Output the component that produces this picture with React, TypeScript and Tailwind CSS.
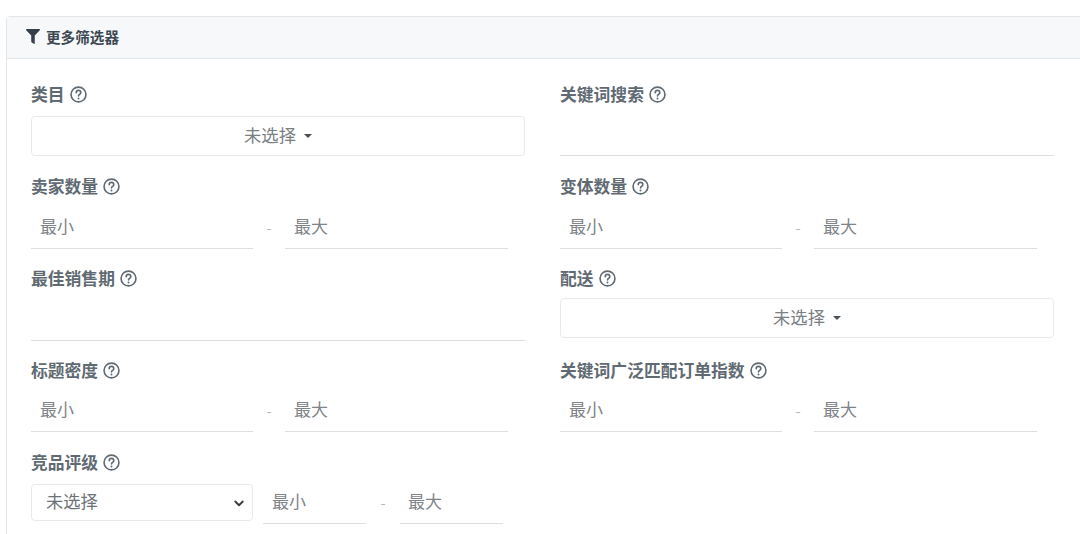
const cjk = "font-['Noto_Sans_CJK_SC','Noto_Sans',sans-serif]";

const Help = () => (
    <svg width="17" height="17" viewBox="0 0 24 24" fill="none" stroke="#5f6a72" strokeWidth="2.3" className="ml-[5px] shrink-0">
        <circle cx="12" cy="12" r="10.5" />
        <path d="M8.8 9.4a3.2 3.2 0 0 1 6.4 0c0 2.4-3.2 2.6-3.2 4.8" strokeLinecap="round" />
        <circle cx="12" cy="17.6" r="1.4" fill="#5f6a72" stroke="none" />
    </svg>
);

const Label = ({ text }: { text: string }) => (
    <div className="flex items-center h-[20px] text-[16.8px] font-bold text-[#5f6a72] leading-none">
        {text}
        <Help />
    </div>
);

const Caret = () => (
    <span className="ml-[8px] mt-[3px] w-0 h-0 border-x-[4px] border-x-transparent border-t-[4.5px] border-t-[#495057]"></span>
);

const Dropdown = ({ top }: { top: string }) => (
    <div className={`${top} h-[40px] w-[494px] flex items-center justify-center pb-[3px] rounded-[4px] border border-[#e7eaed] bg-white text-[17.3px] text-[#7a7f83]`}>
        未选择
        <Caret />
    </div>
);

const Field = ({ text, width }: { text: string; width: string }) => (
    <div className={`${width} h-[41px] flex items-center pb-[4px] border-b border-[#dcdfe2] text-[17px] text-[#7f8488]`}>
        {text}
    </div>
);

const Range = ({ top }: { top: string }) => (
    <div className={`${top} flex items-center`}>
        <Field text="最小" width="w-[222px] pl-[9px]" />
        <span className="w-[32px] text-center text-[15px] text-[#b5b9bc]">-</span>
        <Field text="最大" width="w-[223px] pl-[9px]" />
    </div>
);

const TextField = ({ top }: { top: string }) => <div className={`${top} h-[41px] w-[494px] border-b border-[#dcdfe2]`}></div>;

const App = () => {
    return (
        <div className={`w-[1080px] h-[534px] overflow-hidden bg-white pt-[16px] pl-[6px] ${cjk}`}>
            <div className="w-[1200px] h-[600px] rounded-t-[4px] border border-[#e3e6e9]">
                <div className="h-[42px] flex items-center pl-[19px] pb-[2px] bg-[#f7f8fa] border-b border-[#e3e6e9] text-[14.6px] font-bold text-[#3d4852]">
                    <svg width="14" height="15" viewBox="0 0 512 512" fill="#343f4b" className="mr-[6px]" preserveAspectRatio="none">
                        <path d="M487.98 0H24.05C2.7 0-8.07 25.9 7.05 41.03L192 226v206c0 7.8 3.8 15.2 10.24 19.7l80 56C298.02 518.7 320 507.5 320 488V226L504.98 41.03C520.07 25.93 509.37 0 487.98 0z" />
                    </svg>
                    更多筛选器
                </div>
                <div className="pt-[25px] pl-[24px] grid grid-cols-[494px_494px] gap-x-[35px] auto-rows-[92px]">
                    <div>
                        <Label text="类目" />
                        <Dropdown top="mt-[12px]" />
                    </div>
                    <div>
                        <Label text="关键词搜索" />
                        <TextField top="mt-[11px]" />
                    </div>
                    <div>
                        <Label text="卖家数量" />
                        <Range top="mt-[12px]" />
                    </div>
                    <div>
                        <Label text="变体数量" />
                        <Range top="mt-[12px]" />
                    </div>
                    <div>
                        <Label text="最佳销售期" />
                        <TextField top="mt-[12px]" />
                    </div>
                    <div>
                        <Label text="配送" />
                        <Dropdown top="mt-[10px]" />
                    </div>
                    <div>
                        <Label text="标题密度" />
                        <Range top="mt-[11px]" />
                    </div>
                    <div>
                        <Label text="关键词广泛匹配订单指数" />
                        <Range top="mt-[11px]" />
                    </div>
                    <div>
                        <Label text="竞品评级" />
                        <div className="mt-[9px] flex items-center">
                            <div className="w-[222px] h-[37px] flex items-center justify-between pl-[14px] pr-[7px] pb-[3px] rounded-[4px] border border-[#e7eaed] text-[17.3px] text-[#6f7478]">
                                未选择
                                <svg width="12" height="12" viewBox="0 0 16 16" fill="none" stroke="#343a40" strokeWidth="2.4" strokeLinecap="round" strokeLinejoin="round" className="mt-[3px]">
                                    <path d="M3 6l5 5 5-5" />
                                </svg>
                            </div>
                            <div className="ml-[10px] mt-[2px] flex items-center">
                                <Field text="最小" width="w-[103px] pl-[9px]" />
                                <span className="w-[34px] text-center text-[15px] text-[#b5b9bc]">-</span>
                                <Field text="最大" width="w-[103px] pl-[8px]" />
                            </div>
                        </div>
                    </div>
                </div>
            </div>
        </div>
    );
};

export default App;
